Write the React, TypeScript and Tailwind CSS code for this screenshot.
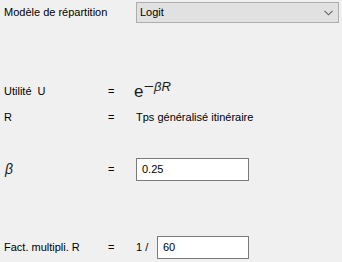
import React from "react";

export default function App() {
  return (
    <div
      className="w-[342px] h-[262px] bg-[#f0f0f0] text-black overflow-hidden flex flex-col text-[11px]"
      style={{ fontFamily: '"Liberation Sans", Arial, sans-serif' }}
    >
      {/* Row 1 */}
      <div className="mt-[2px] h-[21px] flex items-center">
        <div className="w-[136px] pl-[4px]">Modèle de répartition</div>
        <div className="w-[203px] h-[21px] bg-[#e1e1e1] border border-[#adadad] flex items-center justify-between pl-[3px] pr-[5px]">
          <span>Logit</span>
          <svg width="9" height="6" viewBox="0 0 9 6" fill="none">
            <path d="M0.5 0.8 L4.5 4.8 L8.5 0.8" stroke="#606060" strokeWidth="1.1" />
          </svg>
        </div>
      </div>

      {/* Utilité row */}
      <div className="mt-[58px] h-[20px] flex items-center">
        <div className="w-[104px] pl-[4px]">Utilité&nbsp; U</div>
        <div className="w-[30px] pl-[4px]">=</div>
        <div className="flex items-end leading-none text-[#1a1a1a]">
          <span className="text-[17px]">e</span>
          <span className="text-[13px] relative -top-[7px] flex items-center">
            <span className="inline-block scale-x-[1.35] ml-[2px] mr-[1px]">−</span>
            <span className="italic">βR</span>
          </span>
        </div>
      </div>

      {/* R row */}
      <div className="mt-[6px] h-[20px] flex items-center">
        <div className="w-[104px] pl-[4px]">R</div>
        <div className="w-[32px] pl-[4px]">=</div>
        <div>Tps généralisé itinéraire</div>
      </div>

      {/* beta row */}
      <div className="mt-[31px] h-[23px] flex items-center">
        <div className="w-[104px] pl-[5px] text-[14px] italic text-[#1a1a1a]">β</div>
        <div className="w-[32px] pl-[4px]">=</div>
        <div className="w-[113px] h-[23px] bg-white border border-[#7a7a7a] flex items-center pl-[5px]">0.25</div>
      </div>

      {/* Fact row */}
      <div className="mt-[55px] h-[23px] flex items-center">
        <div className="w-[104px] pl-[4px]">Fact. multipli. R</div>
        <div className="w-[32px] pl-[4px]">=</div>
        <div className="w-[21px]">1 /</div>
        <div className="w-[92px] h-[23px] bg-white border border-[#7a7a7a] flex items-center pl-[5px]">60</div>
      </div>
    </div>
  );
}
